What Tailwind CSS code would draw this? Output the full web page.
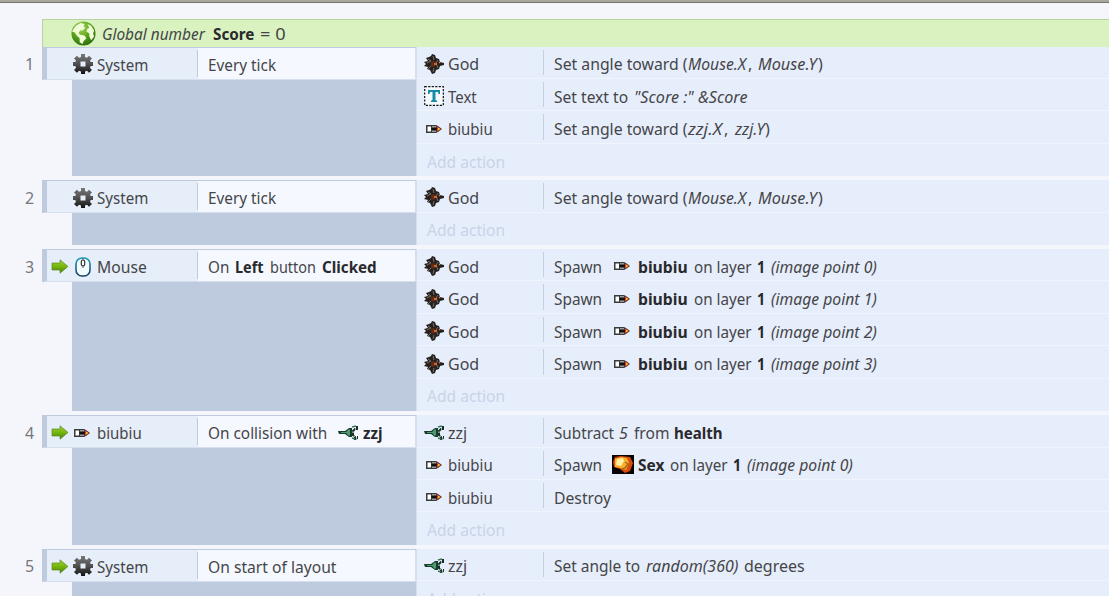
<!DOCTYPE html>
<html lang="en">
<head>
<meta charset="utf-8">
<title>Event sheet</title>
<script src="https://cdn.jsdelivr.net/npm/@tailwindcss/browser@4"></script>
</head>
<body class="h-[596px] w-[1109px] overflow-hidden bg-[#f5f6fb] font-['Noto_Sans',sans-serif] text-[16px] leading-5 text-[#454549]">
<svg class="absolute h-0 w-0" xmlns="http://www.w3.org/2000/svg">
  <defs>
    <radialGradient id="gb" cx=".4" cy=".25" r=".8"><stop offset="0" stop-color="#a9d95e"/><stop offset=".5" stop-color="#5ca51e"/><stop offset="1" stop-color="#26680e"/></radialGradient>
    <linearGradient id="gg" x2="0" y2="1"><stop stop-color="#777"/><stop offset=".5" stop-color="#505050"/><stop offset="1" stop-color="#111"/></linearGradient>
    <linearGradient id="ga" x2="0" y2="1"><stop stop-color="#a1cd3e"/><stop offset=".5" stop-color="#75b70b"/><stop offset="1" stop-color="#4d7e0b"/></linearGradient>
    <linearGradient id="gm" x2="0" y2="1"><stop stop-color="#179bb8"/><stop offset="1" stop-color="#173f60"/></linearGradient>
  </defs>
  <symbol id="globe" viewBox="0 0 26 26"><circle cx="13" cy="13" r="12.500" fill="url(#gb)"/><path d="M2 9 5 5l5-3 4 1-1 3 2 1-3 3-2-.5L8 12l1 2 5 1 2 3-3 3-1 3-3-2 0-4-3-3-2-3-3-1zM17 3l4 2 3 5-1 3 1 3-3 4-2-4 0-3-3-2 1-3 2-1z" fill="#f0fbd8"/></symbol>
  <symbol id="gear" viewBox="0 0 20 20"><path fill="url(#gg)" fill-rule="evenodd" d="M8 0h4v3l2 .8 2-2L19 4.500l-2 2 .7 1.500H20v4h-2.300l-.7 2 2 2-3 2.800-2-2-2 .7v2.500H8v-2.500l-2-.7-2 2L1 16l2-2-.7-2H0V8h2.300L3 6.500l-2-2L4 1.800l2 2L8 3zM7.500 7.500v5h5v-5z"/></symbol>
  <symbol id="arrow" viewBox="0 0 18 15"><path fill="url(#ga)" stroke="#5c8b24" stroke-width=".7" stroke-linejoin="round" d="M1 4h8V.8L17 7.500 9 14.200V11H1z"/></symbol>
  <symbol id="mouse" viewBox="0 0 16 20"><rect x="1" y="1" width="14" height="18" rx="6" fill="#f2fafd" stroke="url(#gm)" stroke-width="1.600"/><rect x="6.300" y="3" width="3.400" height="6" rx="1.700" fill="#fff" stroke="#333" stroke-width="1.200"/><path d="M8 1v2M8 9v2" stroke="#555"/></symbol>
  <symbol id="god" viewBox="0 0 20 20"><path fill="#25211f" d="M8 0l3 1 1 3 3 1 1 3 4 1v2l-4 1-1 3-3 1-1 3-3 1-2-4-3-1 1-2-4-1 2-2-2-2 4-1-2-3 3-1 2-1z"/><path d="M4 5l3 2-4 2M4 15l3-3M9 2l1 4M9 18l1-4M14 6l-2 3 2 5" stroke="#77736d" fill="none"/><path fill="#6a2812" d="M7 8l3-1 2 3-2 3-3-1z"/><path d="M10 10h3M15 8l1 1" stroke="#e98040" stroke-width="1.300"/></symbol>
  <symbol id="text" viewBox="0 0 20 20"><rect x=".7" y=".7" width="18.600" height="18.600" fill="#f6faff" stroke="#111" stroke-width="1.200" stroke-dasharray="2.200 1.300"/><path fill="#168ba8" d="M4 4h12v4h-1.500L14 6h-2.500v8l1.500.7V16H7v-1.300l1.500-.7V6H6L5.500 8H4z"/></symbol>
  <symbol id="ship" viewBox="0 0 16 8"><path fill="#3b3b3b" d="M0 0h10l2 1 4 3-4 3-2 1H0z"/><path fill="#fff" d="M1.500 1.500h3.500v5H1.500z"/><path fill="#bbb" d="M6 1.300h4v1H6zM6 5.700h4v1H6z"/><path fill="#111" d="M5.500 3h6v2h-6z"/><path fill="#e34118" d="M11 1.300l4 2.700-4 2.700z"/><path fill="#ffc22f" d="M12 3h1.500v2H12z"/></symbol>
  <symbol id="zzj" viewBox="0 0 20 15"><path fill="#173c2b" d="M0 6h7l4-3h3v9h-3L7 9H1z"/><path fill="#4f9972" d="M3 7h5l3-3 1 1v5l-1 1-3-3H3z"/><path fill="none" stroke="#142f24" stroke-width="2" stroke-dasharray="4 .7" d="M19 1v3h-2l-2 2v4l2 2v2l3-1v-2"/><path d="M14 2l4-1M14 13l3 1" stroke="#397858" stroke-width="1.500"/></symbol>
  <symbol id="boom" viewBox="0 0 22 19"><path fill="#080403" d="M0 0h22v19H0z"/><path fill="#d84b0a" d="M3 2l6-1 9 1 3 6-3 8-5 2-5-4-6-2-1-5z"/><path fill="#fbb12e" d="M3 4l6-2 6 1 2 5-3 7-6-2-5-1z"/><path fill="#fff0a4" d="M5 4l6-1 1 3-3 5-5-1z"/><path d="M13 7l3 2-3 4-3 1" stroke="#a86a18" fill="none" stroke-width="1.500"/></symbol>
</svg>
<div class="h-[3px] border-b border-[#77746c] bg-[#aaa79c]"></div>
<main class="pt-4">
  <div id="global" class="ml-[42px] flex h-[27.6px] items-center border-t border-l border-[#b6d3a0] bg-[#d9f2c0] pt-px"></div>
  <div id="sheet"></div>
</main>
<script>
const R='', B='font-bold text-[#29292d]', I='italic', F='text-[#c8d3e8]';
const icons={
 globe:'<svg class="h-[25px] w-[25px] shrink-0"><use href="#globe"/></svg>',
 gear:'<svg class="h-[20px] w-[20px] shrink-0"><use href="#gear"/></svg>',
 arrow:'<svg class="h-[15px] w-[18px] shrink-0"><use href="#arrow"/></svg>',
 mouse:'<svg class="h-[20px] w-[16px] shrink-0"><use href="#mouse"/></svg>',
 god:'<svg class="h-[20px] w-[20px] shrink-0"><use href="#god"/></svg>',
 text:'<svg class="h-[20px] w-[20px] shrink-0"><use href="#text"/></svg>',
 ship:'<svg class="h-[8px] w-[16px] shrink-0"><use href="#ship"/></svg>',
 zzj:'<svg class="h-[15px] w-[20px] shrink-0"><use href="#zzj"/></svg>',
 boom:'<svg class="h-[19px] w-[22px] shrink-0"><use href="#boom"/></svg>'};
const widths={globe:25,gear:20,arrow:18,mouse:16,god:20,text:20,ship:16,zzj:20,boom:22};
// A run is [text, style, left, right]; an icon is [name, left].
function line(origin, items){
  let at=origin;
  return items.map(i=>{
    const icon=i.length===2, left=icon?i[1]:i[2], right=icon?left+widths[i[0]]:i[3];
    const gap=left-at; at=right;
    return icon?`<span class="flex shrink-0 pb-px" style="margin-left:${gap}px">${icons[i[0]]}</span>`
      :`<span class="flex shrink-0 whitespace-pre ${i[1]}" style="margin-left:${gap}px;width:${right-left}px"><span class="run shrink-0 origin-left" data-w="${right-left}">${i[0]}</span></span>`;
  }).join('');
}
const god=[['god',424],['God',R,448,479]], ship=[['ship',426],['biubiu',R,448,493]], zzj=[['zzj',424],['zzj',R,448,467]];
const mouseT=[['Set angle toward (',R,554,688],['Mouse.X',I,688,746],[',',R,748,752],['Mouse.Y',I,758,817],[')',R,818,823]];
const zT=[['Set angle toward (',R,554,688],['zzj.X',I,688,722],[',',R,724,728],['zzj.Y',I,735,765],[')',R,765,770]];
const spawn=n=>[god,[['Spawn',R,554,602],['ship',614],['biubiu',B,638,688],['on layer',R,694,752],['1',B,757,765],[`(image point ${n})`,I,771,877]]];
const sys=[['gear',73],['System',R,97,148]], tick=[['Every tick',R,208,276]];
const events=[
 [sys,tick,[[god,mouseT],[[['text',424],['Text',R,448,477]],[['Set text to',R,554,628],['"Score :" &amp;Score',I,634,747]]],[ship,zT]]],
 [sys,tick,[[god,mouseT]]],
 [[['arrow',51],['mouse',75],['Mouse',R,97,147]],[['On',R,208,229],['Left',B,235,264],['button',R,270,316],['Clicked',B,322,377]],[spawn(0),spawn(1),spawn(2),spawn(3)]],
 [[['arrow',51],['ship',74],['biubiu',R,97,142]],[['On collision with',R,208,327],['zzj',338],['zzj',B,363,383]],
  [[zzj,[['Subtract',R,554,614],['5',I,619,628],['from',R,634,669],['health',B,674,723]]],
   [ship,[['Spawn',R,554,602],['boom',612],['Sex',B,638,664],['on layer',R,670,728],['1',B,733,741],['(image point 0)',I,747,853]]],
   [ship,[['Destroy',R,554,611]]]]],
 [[['arrow',51],...sys],[['On start of layout',R,208,336]],[[zzj,[['Set angle to',R,554,640],['random(360)',I,646,738],['degrees',R,744,805]]]]]
];
document.getElementById('global').innerHTML=line(43,[['globe',71],['Global number',I,102,205],['Score',B,213,254],['= 0',R,260,285]]);
document.getElementById('sheet').innerHTML=events.map((e,n)=>`
<section class="mb-[3.9px] flex">
  <div class="flex h-[32.5px] w-[42px] items-center pt-[3px]">${line(0,[[String(n+1),'text-[#77777c]',25,34]])}</div>
  <div class="relative w-[375px] border-r border-[#d4deed]">
    <div class="absolute inset-y-0 right-0 left-[30px] bg-[#becbdf]"></div>
    <div class="relative flex h-[33px] border-t border-b border-l-[5px] border-t-[#becbdf] border-b-[#d5dfed] border-l-[#becbdf] bg-[#e5eef9]">
      <div class="flex w-[150px] items-center pt-[3px]">${line(47,e[0])}</div>
      <div class="my-[2px] w-px bg-[#becbdf]"></div>
      <div class="flex flex-1 items-center border-r border-[#d4deed] bg-[#f5f9ff] pt-[3px]">${line(198,e[1])}</div>
    </div>
  </div>
  <div class="flex-1">
    ${e[2].map(a=>`<div class="flex h-[32.45px] border-b border-[#f0f4fc] bg-[#e7eefb]">
      <div class="flex w-[126px] items-center pt-[4px]">${line(417,a[0])}</div><div class="my-[3px] w-px bg-[#c3cfe3]"></div><div class="flex flex-1 items-center pt-[4px]">${line(544,a[1])}</div></div>`).join('')}
    <div class="flex h-[32.45px] items-center bg-[#e7eefb] pt-[3px]">${line(417,[['Add action',F,427,505]])}</div>
  </div>
</section>`).join('');
// Condense each run to its column width.
function fit(){
  for(const s of document.querySelectorAll('.run')) s.style.transform='scaleX('+s.dataset.w/s.offsetWidth+')';
}
fit();
addEventListener('load',fit);
document.fonts.ready.then(fit);
</script>
</body>
</html>
